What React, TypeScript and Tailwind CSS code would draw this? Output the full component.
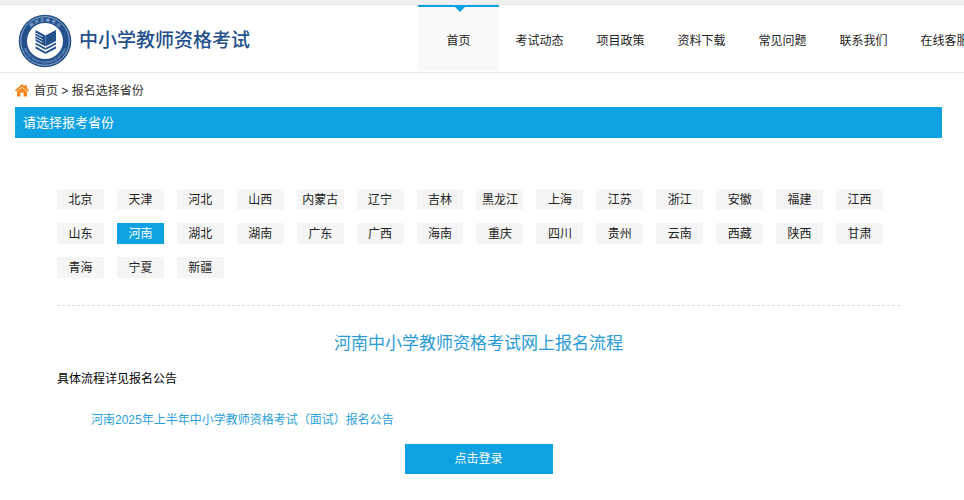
const navItems = ["首页", "考试动态", "项目政策", "资料下载", "常见问题", "联系我们", "在线客服"];

const provinces = [
  "北京", "天津", "河北", "山西", "内蒙古", "辽宁", "吉林", "黑龙江", "上海", "江苏", "浙江", "安徽", "福建", "江西",
  "山东", "河南", "湖北", "湖南", "广东", "广西", "海南", "重庆", "四川", "贵州", "云南", "西藏", "陕西", "甘肃",
  "青海", "宁夏", "新疆",
];

function Emblem() {
  return (
    <svg viewBox="0 0 54 54" className="size-[54px] shrink-0" aria-hidden="true">
      <defs>
        <path id="arc-top" d="M7.5 27a19.5 19.5 0 0 1 39 0" />
        <path id="arc-bottom" d="M4.8 27a22.2 22.2 0 0 0 44.4 0" />
      </defs>
      <circle cx="27" cy="27" r="26.300" fill="#24508c" />
      <circle cx="27" cy="27" r="24.300" fill="none" stroke="#a9bfdc" strokeWidth="0.8" />
      <circle cx="27" cy="27" r="18" fill="#fff" />
      <g fill="#b9cbe3" fontFamily="'Liberation Sans','Noto Sans CJK SC',sans-serif">
        <text fontSize="4.200" textAnchor="middle">
          <textPath href="#arc-top" startOffset="50%">教  师  资  格  考  试</textPath>
        </text>
        <text fontSize="3" textAnchor="middle">
          <textPath href="#arc-bottom" startOffset="50%">National Teacher Certificate Examination</textPath>
        </text>
      </g>
      <g fill="#24508c">
        <path d="M17.500 16l10 5.500v11l-10-5.500z" />
        <path d="M38 16l-10.500 5.500v11L38 27z" />
        <path d="M17.500 28.600l10 5.500v2l-10-5.500zM17.500 32.200l10 5.500v2.300l-10-5.500z" />
        <path d="M38 28.600l-10.500 5.500v2L38 30.600zM38 32.200l-10.500 5.500v2.300L38 34.500z" />
      </g>
      <path d="M17.500 19l7 3.700M17.500 21.800l7 3.700M17.500 24.600l7 3.700" stroke="#fff" strokeWidth="0.800" />
    </svg>
  );
}

function HomeIcon() {
  return (
    <svg viewBox="0 0 14 13" className="h-[13px] w-[14px]" fill="#f9871f" aria-hidden="true">
      <path d="M7 0l2.700 2.300V1h2.200v3.200L14 6.200l-1.200 1.500L7 2.700 1.200 7.700 0 6.200z" />
      <path d="M7 3.500l5 4.300V12.500H8.600V8.800H5.400v3.700H2V7.800z" />
    </svg>
  );
}

export default function App() {
  return (
    <div className="min-h-screen overflow-hidden bg-white font-['Liberation_Sans','Noto_Sans_CJK_SC',sans-serif] text-xs text-[#222]">
      <div className="h-[5px] border-b border-[#e4e4e4] bg-[#f0f0f0]" />
      <header className="flex h-[68px] overflow-hidden border-b border-[#e5e5e5]">
        <a href="#" className="flex w-[418px] shrink-0 items-center gap-[7px] pt-1 pl-[18px]">
          <Emblem />
          <span className="text-[19px] leading-6 font-medium text-[#24508c]">中小学教师资格考试</span>
        </a>
        <nav className="flex">
          {navItems.map((item, i) => (
            <a
              key={item}
              href="#"
              className={
                i === 0
                  ? "relative flex h-[66px] w-[81px] shrink-0 items-center justify-center border-t-2 border-[#0fa2e2] bg-[#f9f9f9] pt-1"
                  : "flex h-[66px] w-[81px] shrink-0 items-center justify-center pt-[6px]"
              }
            >
              {i === 0 && (
                <svg viewBox="0 0 10 5" className="absolute top-0 left-[37px] h-[5px] w-[10px]" fill="#0fa2e2" aria-hidden="true">
                  <path d="M0 0h10L5 5z" />
                </svg>
              )}
              {item}
            </a>
          ))}
        </nav>
      </header>

      <main className="pr-[22px] pl-[15px]">
        <div className="flex h-[34px] items-center gap-[5px] text-[#333]">
          <HomeIcon />
          <span className="pt-px">
            <a href="#">首页</a> &gt; 报名选择省份
          </span>
        </div>
        <h1 className="h-[31px] bg-[#0fa2e2] pl-2 text-[13px] leading-[31px] text-white">请选择报考省份</h1>

        <section className="px-[42px]">
          <div className="mt-[51px] mr-[17px] grid grid-cols-14 gap-x-[13px] gap-y-[13px]">
            {provinces.map((name) => (
              <button
                key={name}
                type="button"
                className={
                  name === "河南"
                    ? "h-[21px] bg-[#0fa2e2] leading-5 whitespace-nowrap text-white"
                    : "h-[21px] bg-[#f5f5f5] leading-5 whitespace-nowrap"
                }
              >
                {name}
              </button>
            ))}
          </div>
          <hr className="mt-[27px] border-t border-dashed border-[#ddd]" />
          <h2 className="mt-[26px] text-center text-[17px] leading-6 text-[#2a9bd6]">河南中小学教师资格考试网上报名流程</h2>
          <p className="mt-[13px] leading-5 text-black">具体流程详见报名公告</p>
          <p className="mt-[21px] pl-[34px] leading-5">
            <a href="#" className="text-[#2a9fd9]">河南2025年上半年中小学教师资格考试（面试）报名公告</a>
          </p>
          <div className="mt-[14px] flex justify-center">
            <button type="button" className="h-[30px] w-[148px] bg-[#0fa2e2] text-white">点击登录</button>
          </div>
        </section>
      </main>
    </div>
  );
}
